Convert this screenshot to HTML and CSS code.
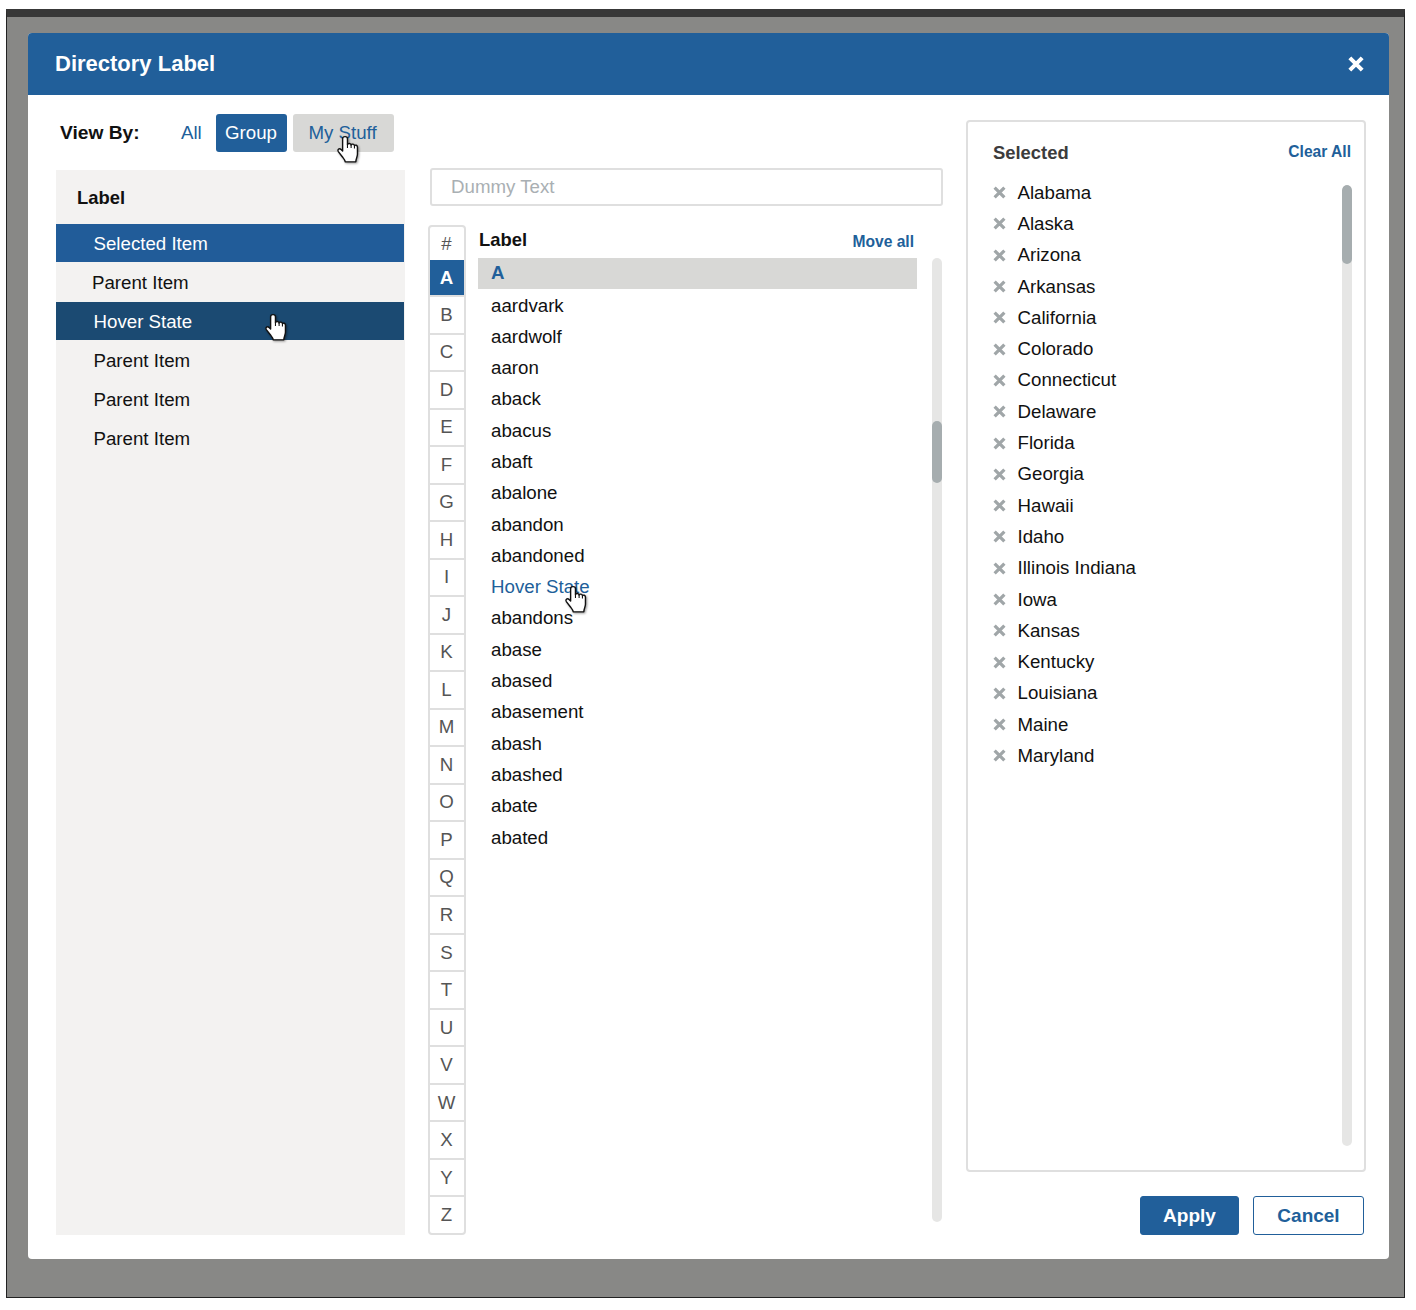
FILE: index.html
```html
<!DOCTYPE html>
<html lang="en">
<head>
    <meta charset="UTF-8">
    <meta name="viewport" content="width=device-width, initial-scale=1.0">
    <title>Directory Label</title>
    <link rel="stylesheet" href="styles.css">
</head>
<body>
  <svg class="defs" width="0" height="0">
    <symbol id="hand" viewBox="-1 -1 22 27">
      <path d="M5 2.500c0-2.600 4.500-2.600 4.500 0V8c.5-1.600 3.200-1.400 3.400.4c.6-1.400 3-1.200 3.100.6c.8-1 2.800-.6 2.800 1.200V17c0 2.500-1.500 4-1.500 7H7.500c-.3-2-1.500-3-3-5L1 14.500c-1.300-2 1-3.500 2.500-2L5 14Z" fill="#fff" stroke="#111" stroke-width="1.300" stroke-linejoin="round"/>
      <path d="M9.500 8v3M12.900 8.400V11M16 9v2.500" fill="none" stroke="#111" stroke-width="1"/>
    </symbol>
    <symbol id="x-mark" viewBox="0 0 12 12">
      <path d="M1.500 1.500l9 9M10.500 1.500l-9 9" stroke="#a0a6a8" stroke-width="3"/>
    </symbol>
  </svg>

  <div class="overlay">
    <div class="modal">
      <div class="modal-header">
        <h1 class="modal-title">Directory Label</h1>
        <svg class="close-icon" viewBox="0 0 16 16"><path d="M2.500 2.500l11 11M13.500 2.500l-11 11" stroke="#fff" stroke-width="3.600"/></svg>
      </div>

      <div class="modal-body">
        <div class="left-col">
          <div class="view-by">
            <span class="view-label">View By:</span>
            <a class="view-all">All</a>
            <a class="view-btn view-group">Group</a>
            <a class="view-btn view-stuff">My Stuff
              <svg class="cursor cursor-stuff"><use href="#hand"/></svg>
            </a>
          </div>
          <div class="sidebar">
            <div class="sidebar-title">Label</div>
            <div class="side-item selected">Selected Item</div>
            <div class="side-item first-parent">Parent Item</div>
            <div class="side-item hover">Hover State
              <svg class="cursor cursor-side"><use href="#hand"/></svg>
            </div>
            <div class="side-item">Parent Item</div>
            <div class="side-item">Parent Item</div>
            <div class="side-item">Parent Item</div>
          </div>
        </div>

        <div class="middle-col">
          <div class="search">Dummy Text</div>
          <div class="browse">
            <div class="alphabet">
              <div class="letter letter-hash">#</div>
              <div class="letter active">A</div>
              <div class="letter">B</div>
              <div class="letter">C</div>
              <div class="letter">D</div>
              <div class="letter">E</div>
              <div class="letter">F</div>
              <div class="letter">G</div>
              <div class="letter">H</div>
              <div class="letter">I</div>
              <div class="letter">J</div>
              <div class="letter">K</div>
              <div class="letter">L</div>
              <div class="letter">M</div>
              <div class="letter">N</div>
              <div class="letter">O</div>
              <div class="letter">P</div>
              <div class="letter">Q</div>
              <div class="letter">R</div>
              <div class="letter">S</div>
              <div class="letter">T</div>
              <div class="letter">U</div>
              <div class="letter">V</div>
              <div class="letter">W</div>
              <div class="letter">X</div>
              <div class="letter">Y</div>
              <div class="letter">Z</div>
            </div>
            <div class="word-col">
              <div class="word-head">
                <span class="word-label">Label</span>
                <a class="move-all">Move all</a>
              </div>
              <div class="word-section">A</div>
              <div class="word">aardvark</div>
              <div class="word">aardwolf</div>
              <div class="word">aaron</div>
              <div class="word">aback</div>
              <div class="word">abacus</div>
              <div class="word">abaft</div>
              <div class="word">abalone</div>
              <div class="word">abandon</div>
              <div class="word">abandoned</div>
              <div class="word word-hover">Hover State
                <svg class="cursor cursor-word"><use href="#hand"/></svg>
              </div>
              <div class="word">abandons</div>
              <div class="word">abase</div>
              <div class="word">abased</div>
              <div class="word">abasement</div>
              <div class="word">abash</div>
              <div class="word">abashed</div>
              <div class="word">abate</div>
              <div class="word">abated</div>
            </div>
            <div class="scroll scroll-words"><div class="thumb thumb-words"></div></div>
          </div>
        </div>

        <div class="right-col">
          <div class="selected-panel">
            <div class="selected-head">
              <span class="selected-title">Selected</span>
              <a class="clear-all">Clear All</a>
            </div>
            <div class="selected-body">
              <div class="state-list">
                <div class="state"><svg class="remove"><use href="#x-mark"/></svg>Alabama</div>
                <div class="state"><svg class="remove"><use href="#x-mark"/></svg>Alaska</div>
                <div class="state"><svg class="remove"><use href="#x-mark"/></svg>Arizona</div>
                <div class="state"><svg class="remove"><use href="#x-mark"/></svg>Arkansas</div>
                <div class="state"><svg class="remove"><use href="#x-mark"/></svg>California</div>
                <div class="state"><svg class="remove"><use href="#x-mark"/></svg>Colorado</div>
                <div class="state"><svg class="remove"><use href="#x-mark"/></svg>Connecticut</div>
                <div class="state"><svg class="remove"><use href="#x-mark"/></svg>Delaware</div>
                <div class="state"><svg class="remove"><use href="#x-mark"/></svg>Florida</div>
                <div class="state"><svg class="remove"><use href="#x-mark"/></svg>Georgia</div>
                <div class="state"><svg class="remove"><use href="#x-mark"/></svg>Hawaii</div>
                <div class="state"><svg class="remove"><use href="#x-mark"/></svg>Idaho</div>
                <div class="state"><svg class="remove"><use href="#x-mark"/></svg>Illinois Indiana</div>
                <div class="state"><svg class="remove"><use href="#x-mark"/></svg>Iowa</div>
                <div class="state"><svg class="remove"><use href="#x-mark"/></svg>Kansas</div>
                <div class="state"><svg class="remove"><use href="#x-mark"/></svg>Kentucky</div>
                <div class="state"><svg class="remove"><use href="#x-mark"/></svg>Louisiana</div>
                <div class="state"><svg class="remove"><use href="#x-mark"/></svg>Maine</div>
                <div class="state"><svg class="remove"><use href="#x-mark"/></svg>Maryland</div>
              </div>
              <div class="scroll scroll-states"><div class="thumb"></div></div>
            </div>
          </div>
          <div class="actions">
            <button class="btn btn-apply">Apply</button>
            <button class="btn btn-cancel">Cancel</button>
          </div>
        </div>
      </div>
    </div>
  </div>
</body>
</html>
```

FILE: styles.css
```css
* {
  box-sizing: border-box;
}

html, body {
  height: 1310px;
}

body {
  margin: 0;
  padding: 9px 11px 11px 6px;
  background-color: #fff;
  font-family: "Liberation Sans", Arial, sans-serif;
  font-size: 18.7px;
  color: #111;
  overflow: hidden;
}

.defs {
  position: absolute;
}

.overlay {
  height: 1289px;
  padding: 16px 15px 38px 21px;
  background-color: #888886;
  border: 1px solid #222;
  border-top: 8px solid #383838;
}

.modal {
  display: flex;
  flex-direction: column;
  height: 100%;
  background-color: #fff;
  border-radius: 4px;
  overflow: hidden;
}

.modal-header {
  display: flex;
  justify-content: space-between;
  align-items: center;
  flex: none;
  height: 62px;
  padding: 0 24px 0 27px;
  background-color: #215f9a;
}

.modal-title {
  margin: 0;
  font-size: 22px;
  font-weight: bold;
  color: #fff;
}

.close-icon {
  width: 18px;
  height: 18px;
}

.modal-body {
  display: grid;
  grid-template-columns: 349px 515px 400px;
  column-gap: 23px;
  flex: 1;
  min-height: 0;
  padding: 19px 0 24px 28px;
}

/* left column */
.left-col {
  display: flex;
  flex-direction: column;
  min-height: 0;
}

.view-by {
  display: flex;
  align-items: center;
  flex: none;
  height: 38px;
  padding-left: 4px;
  margin-bottom: 18px;
}

.view-label {
  width: 121px;
  font-size: 19.2px;
  font-weight: bold;
}

.view-all {
  width: 35px;
  color: #215f9a;
}

.view-btn {
  display: flex;
  align-items: center;
  justify-content: center;
  height: 38px;
  border-radius: 3px;
  position: relative;
}

.view-group {
  width: 71px;
  margin-right: 6px;
  padding-right: 1px;
  background-color: #215f9a;
  color: #fff;
}

.view-stuff {
  width: 101px;
  padding-right: 2px;
  background-color: #d8d8d6;
  color: #215f9a;
}

.cursor {
  position: absolute;
  width: 24px;
  height: 29px;
  filter: drop-shadow(1px 1px 1px rgba(0, 0, 0, 0.4));
}

.cursor-stuff {
  left: 43px;
  top: 21px;
}

.cursor-side {
  left: 208px;
  top: 11px;
}

.cursor-word {
  left: 86px;
  top: 14px;
}

.sidebar {
  flex: 1;
  background-color: #f3f2f1;
}

.sidebar-title {
  height: 54px;
  padding: 17px 0 0 21px;
  font-weight: bold;
  font-size: 18.4px;
  line-height: 21px;
}

.side-item {
  position: relative;
  height: 39px;
  margin-right: 1px;
  padding-left: 37.5px;
  line-height: 39px;
}

.first-parent {
  padding-left: 36px;
}

.selected {
  background-color: #215c99;
  color: #fff;
}

.hover {
  background-color: #1b4a72;
  color: #fff;
}

.selected, .hover {
  height: 38px;
  margin-bottom: 1px;
}

/* middle column */
.middle-col {
  display: flex;
  flex-direction: column;
  min-height: 0;
  padding-top: 54px;
}

.search {
  flex: none;
  height: 38px;
  margin-left: 2px;
  padding-left: 19px;
  border: 2px solid #dfdfdf;
  border-radius: 3px;
  line-height: 34px;
  color: #a9afb3;
}

.browse {
  display: flex;
  flex: 1;
  min-height: 0;
  margin-top: 19px;
}

.alphabet {
  display: flex;
  flex-direction: column;
  flex: none;
  width: 38px;
  border: 2px solid #dfdfdf;
  border-radius: 4px;
  overflow: hidden;
}

.letter {
  display: flex;
  align-items: center;
  justify-content: center;
  flex: 1;
  padding-right: 1px;
  border-bottom: 2px solid #dfdfdf;
  color: #555;
}

.letter:last-child {
  border-bottom: none;
}

.letter-hash {
  flex: none;
  height: 33px;
  border-bottom: none;
}

.letter.active {
  flex: none;
  height: 37px;
  background-color: #215f9a;
  font-weight: bold;
  color: #fff;
}

.word-col {
  flex: none;
  width: 439px;
  margin-left: 12px;
}

.word-head {
  display: flex;
  justify-content: space-between;
  align-items: center;
  height: 33px;
  padding: 0 3px 4px 1px;
}

.word-label {
  font-size: 18.4px;
  font-weight: bold;
}

.move-all {
  margin-top: 4px;
  font-size: 15.6px;
  font-weight: bold;
  color: #215f9a;
}

.word-section {
  height: 31px;
  margin-bottom: 0.5px;
  padding-left: 13px;
  background-color: #d8d8d6;
  font-weight: bold;
  line-height: 30px;
  color: #215f9a;
}

.word {
  position: relative;
  height: 31.3px;
  padding-left: 13px;
  line-height: 31.3px;
}

.word-hover {
  color: #215f9a;
}

.scroll {
  flex: none;
  width: 10px;
  background-color: #e6e6e5;
  border-radius: 5px;
  overflow: hidden;
}

.scroll-words {
  height: 964px;
  margin: 33px 0 0 15px;
}

.thumb {
  height: 79px;
  background-color: #a6adaf;
  border-radius: 5px;
}

.thumb-words {
  height: 62px;
  margin-top: 163px;
}

/* right column */
.right-col {
  display: flex;
  flex-direction: column;
  min-height: 0;
  padding-top: 6px;
}

.selected-panel {
  display: flex;
  flex-direction: column;
  flex: none;
  height: 1052px;
  padding: 0 12px 24px 25px;
  border: 2px solid #dfdfdf;
  border-radius: 4px;
}

.selected-head {
  display: flex;
  justify-content: space-between;
  flex: none;
  height: 63px;
  padding-top: 20px;
}

.selected-title {
  font-size: 18.4px;
  font-weight: bold;
  line-height: 22px;
  color: #3c3c3c;
}

.clear-all {
  font-size: 15.6px;
  font-weight: bold;
  line-height: 20px;
  margin-right: 1px;
  color: #215f9a;
}

.selected-body {
  display: flex;
  justify-content: space-between;
  flex: 1;
  min-height: 0;
}

.state-list {
  margin-top: -8px;
}

.state {
  display: flex;
  align-items: center;
  height: 31.3px;
}

.remove {
  flex: none;
  width: 13px;
  height: 13px;
  margin-right: 11.5px;
}

.actions {
  display: flex;
  justify-content: flex-end;
  gap: 14px;
  margin-top: 24px;
  padding-right: 2px;
}

.btn {
  height: 39px;
  border-radius: 3px;
  border: 1px solid #215f9a;
  font-family: inherit;
  font-size: 19px;
  font-weight: bold;
}

.btn-apply {
  width: 99px;
  background-color: #215f9a;
  color: #fff;
}

.btn-cancel {
  width: 111px;
  background-color: #fff;
  color: #215f9a;
}
```
